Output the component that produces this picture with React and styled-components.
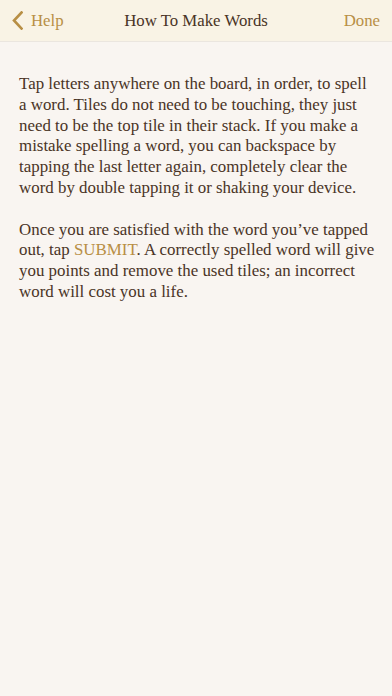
import React from "react";
import styled, { createGlobalStyle } from "styled-components";

const Colors = {
  bar: "#f9f3e5",
  page: "#f9f5f1",
  ink: "#4a3426",
  gold: "#b88f45",
  rule: "#ebe6df",
};

const GlobalStyle = createGlobalStyle`
  html, body {
    margin: 0;
    padding: 0;
    background: ${Colors.page};
  }
  body {
    font-family: "Liberation Serif", "DejaVu Serif", serif;
  }
`;

const Screen = styled.div`
  width: 392px;
  min-height: 696px;
  background: ${Colors.page};
  display: flex;
  flex-direction: column;
`;

const NavBar = styled.header`
  height: 41px;
  background: ${Colors.bar};
  border-bottom: 1px solid ${Colors.rule};
  display: grid;
  grid-template-columns: 1fr auto 1fr;
  align-items: center;
  padding: 0 12px 0 12px;
`;

const NavButton = styled.button`
  display: flex;
  align-items: center;
  gap: 8px;
  justify-self: ${(p) => (p.$right ? "end" : "start")};
  background: none;
  border: 0;
  padding: 0;
  color: ${Colors.gold};
  font-family: inherit;
  font-size: 16.8px;
  cursor: pointer;
`;

const Title = styled.h1`
  margin: 0;
  font-size: 16.8px;
  font-weight: normal;
  color: ${Colors.ink};
`;

const Body = styled.main`
  padding: 32px 15px 0 19px;
  color: ${Colors.ink};
`;

const Para = styled.p`
  margin: 0 0 20.8px;
  font-size: 16.9px;
  line-height: 20.8px;
`;

const Accent = styled.span`
  color: ${Colors.gold};
`;

const Chevron = () => (
  <svg width="11" height="19" viewBox="0 0 11 19">
    <path
      d="M9.5 1.5 L2 9.5 L9.5 17.5"
      fill="none"
      stroke={Colors.gold}
      strokeWidth="2.6"
      strokeLinecap="square"
    />
  </svg>
);

const App = () => (
  <Screen>
    <GlobalStyle />
    <NavBar>
      <NavButton>
        <Chevron />
        Help
      </NavButton>
      <Title>How To Make Words</Title>
      <NavButton $right>Done</NavButton>
    </NavBar>
    <Body>
      <Para>
        Tap letters anywhere on the board, in order, to spell a word. Tiles do
        not need to be touching, they just need to be the top tile in their
        stack. If you make a mistake spelling a word, you can backspace by
        tapping the last letter again, completely clear the word by double
        tapping it or shaking your device.
      </Para>
      <Para>
        Once you are satisfied with the word you’ve tapped out, tap{" "}
        <Accent>SUBMIT</Accent>. A correctly spelled word will give you points
        and remove the used tiles; an incorrect word will cost you a life.
      </Para>
    </Body>
  </Screen>
);

export default App;
